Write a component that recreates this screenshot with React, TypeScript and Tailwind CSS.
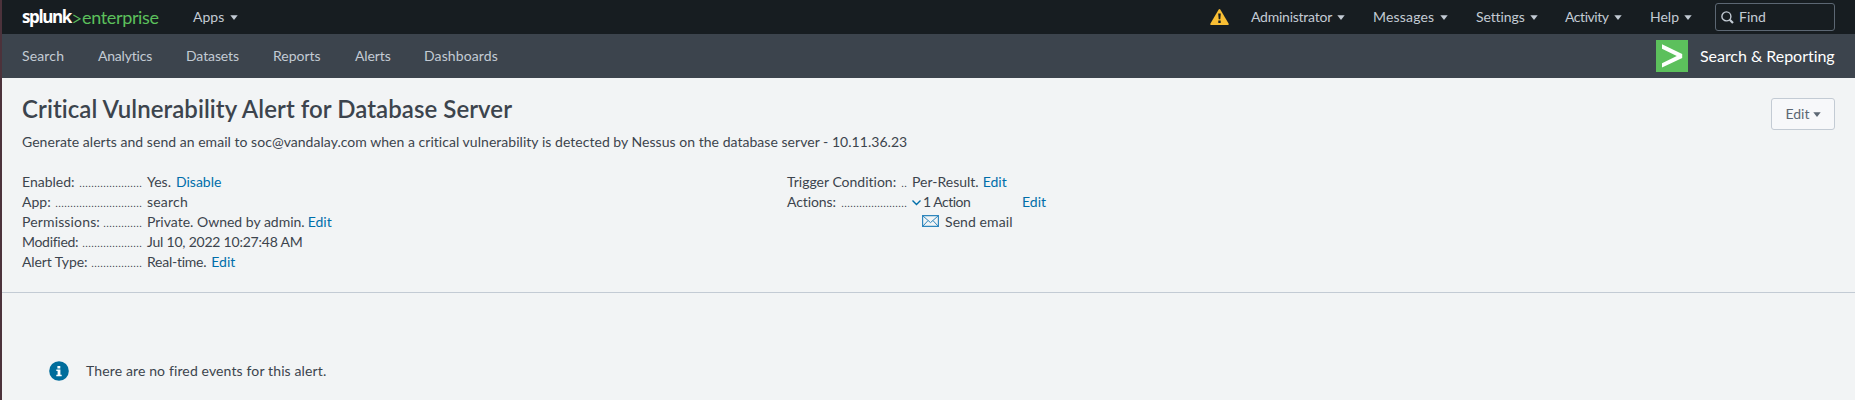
import type { ReactNode } from "react";

function Caret({ className = "" }: { className?: string }) {
  return (
    <svg className={`h-[5px] w-[8px] shrink-0 ${className}`} viewBox="0 0 8 5" fill="currentColor">
      <path d="M0.3 0.2h7.4L4 4.9z" />
    </svg>
  );
}

function MenuItem({ label, className }: { label: string; className: string }) {
  return (
    <button className={`flex h-full shrink-0 items-center justify-between whitespace-nowrap ${className}`}>
      <span>{label}</span>
      <Caret />
    </button>
  );
}

function Link({ children, className = "" }: { children: ReactNode; className?: string }) {
  return (
    <a href="#" className={`text-[#006eaa] ${className}`}>
      {children}
    </a>
  );
}

function Row({ label, labelClass = "", leader, children }: { label: string; labelClass?: string; leader: string; children: ReactNode }) {
  return (
    <div className="flex h-5 whitespace-nowrap">
      <dt className="flex w-[125px] shrink-0 items-baseline justify-between pr-[5px]">
        <span className={labelClass}>{label}</span>
        <span className="font-['Liberation_Sans'] text-[11px] tracking-[-0.06px]">{leader}</span>
      </dt>
      <dd className="flex">{children}</dd>
    </div>
  );
}

function TopBar() {
  return (
    <header className="flex h-[34px] items-center bg-[#171d21] pr-5 pl-5 text-[#c3cbd4]">
      <div className="flex w-[171px] shrink-0 items-center text-[18px] leading-[34px]">
        <span className="w-[49px] font-['Open_Sans'] text-[17px] font-bold tracking-[-1.4px] text-white">splunk</span>
        <svg className="mt-[3px] mr-px ml-[2px] h-[10px] w-[8px]" viewBox="0 0 8 10" fill="none" stroke="#5cc05c" strokeWidth="1.3">
          <path d="M0.4 1L7 4.8L0.4 8.8" />
        </svg>
        <span className="-mt-px tracking-[-0.35px] text-[#5cc05c]">enterprise</span>
      </div>
      <MenuItem label="Apps" className="w-[45px]" />
      <nav className="ml-auto flex h-full items-center">
        <svg className="mr-[22px] h-4 w-[19px]" viewBox="0 0 19 16">
          <path d="M8.7 0.6Q9.5-0.5 10.3 0.6L18.7 14.7Q19 16 18 16H1Q0 16 0.3 14.7z" fill="#f8be34" />
          <path d="M8.2 4.6h2.6l-.5 5.7H8.7zM8.3 11.6h2.4v2.4H8.3z" fill="#171d21" />
        </svg>
        <MenuItem label="Administrator" className="mr-[28px] w-[94px] tracking-[-0.24px]" />
        <MenuItem label="Messages" className="mr-[28px] w-[75px] tracking-[0.18px]" />
        <MenuItem label="Settings" className="mr-[27px] w-[62px] tracking-[-0.1px]" />
        <MenuItem label="Activity" className="mr-[28px] w-[57px] tracking-[-0.45px]" />
        <MenuItem label="Help" className="mr-[23px] w-[42px]" />
        <div className="flex h-[28px] w-[120px] items-center rounded-[3px] border border-[#5c6773] pl-[5px]">
          <svg className="h-[13px] w-[13px]" viewBox="0 0 13 13" fill="none" stroke="currentColor">
            <circle cx="5.4" cy="5.4" r="4.5" strokeWidth="1.4" />
            <path d="M8.7 8.7L12 12" strokeWidth="2.2" />
          </svg>
          <span className="ml-[5px]">Find</span>
        </div>
      </nav>
    </header>
  );
}

function AppBar() {
  return (
    <nav className="flex h-[44px] items-center bg-[#3c444d] pr-5 pl-5 text-[#c3cbd4]">
      <a href="#" className="w-[76px] tracking-[0.15px]">Search</a>
      <a href="#" className="w-[88px] tracking-[-0.2px]">Analytics</a>
      <a href="#" className="w-[87px] tracking-[-0.1px]">Datasets</a>
      <a href="#" className="w-[82px]">Reports</a>
      <a href="#" className="w-[69px] tracking-[-0.1px]">Alerts</a>
      <a href="#" className="tracking-[0.12px]">Dashboards</a>
      <div className="ml-auto flex items-center">
        <svg className="mr-[12px] h-8 w-8" viewBox="0 0 32 32">
          <path d="M0 0h32v32H0z" fill="#5cc05c" />
          <path d="M6 4.3L26.2 14v4L6 27.6v-4.4L20.8 16L6 8.8z" fill="#fff" />
        </svg>
        <span className="w-[135px] text-base whitespace-nowrap tracking-[-0.04px] text-white">Search &amp; Reporting</span>
      </div>
    </nav>
  );
}

export default function App() {
  return (
    <div className="h-[400px] overflow-hidden border-l-2 border-[#4c323b] bg-[#f2f4f5] font-['Lato',sans-serif] text-sm text-[#3c444d] [font-variant-ligatures:none]">
      <TopBar />
      <AppBar />
      <main>
        <section className="h-[215px] border-b border-[#c3cbd4] pr-5 pl-5">
          <div className="flex h-[94px] justify-between pt-4">
            <div className="whitespace-nowrap">
              <h1 className="text-2xl leading-[30px] font-semibold tracking-[0.06px]">Critical Vulnerability Alert for Database Server</h1>
              <p className="mt-[8px] leading-5 tracking-[0.035px]">
                Generate alerts and send an email to soc@vandalay.com when a critical vulnerability is detected by Nessus on the database server - 10.11.36.23
              </p>
            </div>
            <button className="mt-[4px] flex h-[32px] w-[64px] shrink-0 items-center justify-center rounded-[3px] border border-[#c3cbd4] bg-[#f7f8fa] text-[#5c6773]">
              Edit
              <Caret className="ml-[3px]" />
            </button>
          </div>
          <div className="flex leading-5">
            <dl className="w-[765px]">
              <Row label="Enabled:" leader=".....................">
                Yes. <Link className="ml-[5px]">Disable</Link>
              </Row>
              <Row label="App:" leader=".............................">
                <span className="tracking-[0.2px]">search</span>
              </Row>
              <Row label="Permissions:" labelClass="tracking-[0.15px]" leader=".............">
                Private. Owned by admin. <Link className="ml-[3px]">Edit</Link>
              </Row>
              <Row label="Modified:" labelClass="tracking-[-0.3px]" leader="....................">
                <span className="tracking-[-0.22px]">Jul 10, 2022 10:27:48 AM</span>
              </Row>
              <Row label="Alert Type:" labelClass="tracking-[-0.1px]" leader=".................">
                <span className="tracking-[-0.25px]">Real-time.</span> <Link className="ml-[5px]">Edit</Link>
              </Row>
            </dl>
            <dl>
              <Row label="Trigger Condition:" leader="..">
                Per-Result. <Link className="ml-[4px]">Edit</Link>
              </Row>
              <Row label="Actions:" labelClass="tracking-[-0.1px]" leader="......................">
                <svg className="mt-[8px] mr-[2px] h-[6px] w-[9px]" viewBox="0 0 9 6" fill="none" stroke="#006eaa" strokeWidth="1.4">
                  <path d="M0.5 0.6L4.5 4.6L8.5 0.6" />
                </svg>
                <span className="w-[99px] tracking-[-0.5px]">1 Action</span>
                <Link>Edit</Link>
              </Row>
              <div className="flex h-5 pl-[135px]">
                <svg className="mt-[3px] mr-[6px] h-3 w-[17px]" viewBox="0 0 17 12" fill="none" stroke="#2f86bd">
                  <path d="M0.6 0.6h15.8v10.8H0.6z" strokeWidth="1.2" />
                  <path d="M1 1l7.5 6.6L16 1M1 11l5-5.4M16 11l-5-5.4" />
                </svg>
                <span className="tracking-[0.08px]">Send email</span>
              </div>
            </dl>
          </div>
        </section>
        <div className="flex items-center pt-[68px] pl-[47px]">
          <svg className="mr-[17px] h-5 w-5" viewBox="0 0 20 20">
            <circle cx="10" cy="10" r="9.8" fill="#006d9c" />
            <path d="M8.4 4.9h2.9v2.5H8.4zM7.3 8.4h4.1v5.3h1.3v1.5H7.3v-1.5h1.3V9.9H7.3z" fill="#fff" />
          </svg>
          <span className="leading-5 tracking-[0.13px]">There are no fired events for this alert.</span>
        </div>
      </main>
    </div>
  );
}
